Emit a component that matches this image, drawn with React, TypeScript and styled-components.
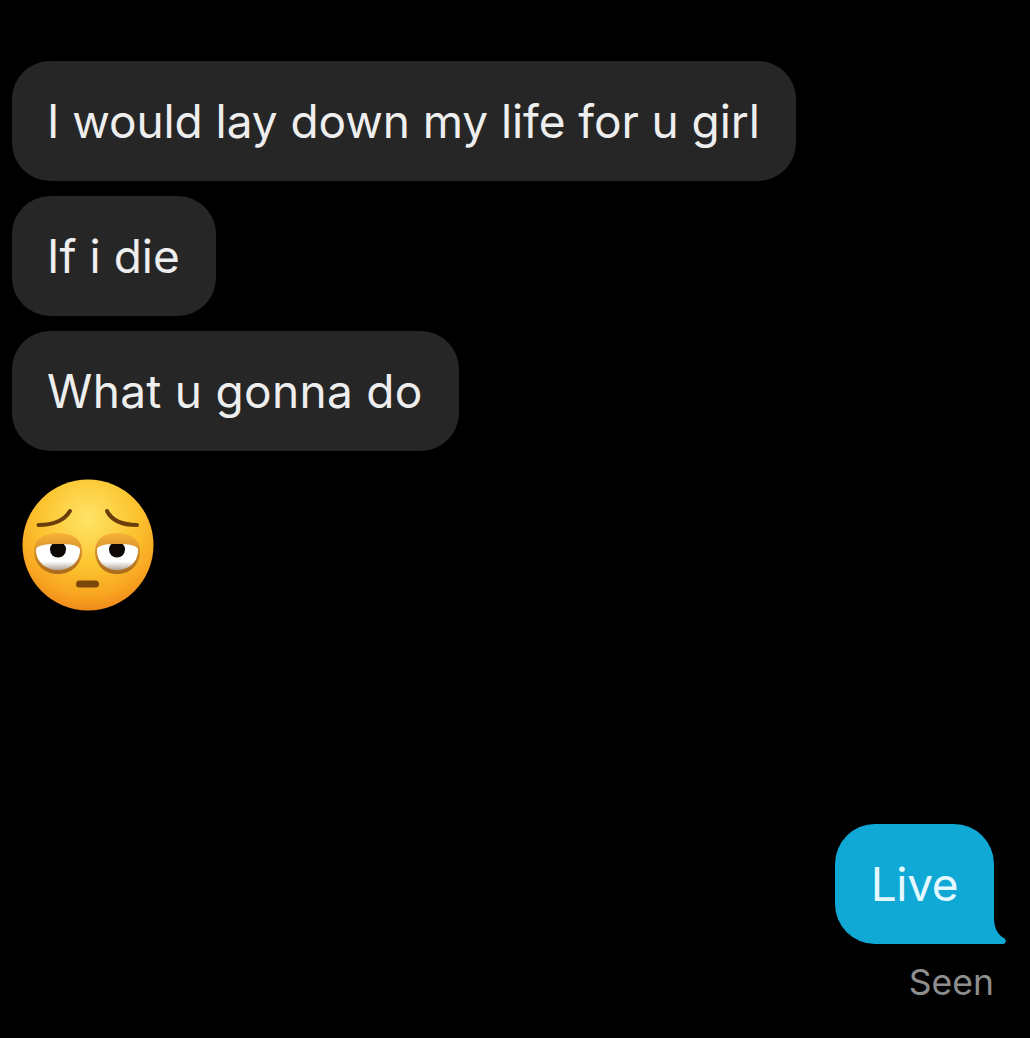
import styled, { createGlobalStyle } from "styled-components";

const GlobalStyle = createGlobalStyle`
  html, body {
    margin: 0;
    background: #000;
  }
`;

const Thread = styled.main`
  display: flex;
  flex-direction: column;
  box-sizing: border-box;
  width: 1030px;
  height: 1038px;
  overflow: hidden;
  padding: 61px 36px 0 12px;
  background: #000;
  font-family: Inter, "Liberation Sans", sans-serif;
`;

const Incoming = styled.div<{ $tracking?: number }>`
  align-self: flex-start;
  box-sizing: border-box;
  height: 120px;
  margin-bottom: 15px;
  padding: 0 36px 0 35px;
  border-radius: 38px;
  background: #262626;
  color: #eeeeee;
  font-size: 46px;
  letter-spacing: ${(props) => props.$tracking ?? -0.1}px;
  line-height: 120px;
  white-space: nowrap;
`;

const EmojiIcon = styled.svg`
  display: block;
  width: 132px;
  height: 132px;
  margin: 13px 0 0 10px;
`;

const Outgoing = styled.div`
  position: relative;
  align-self: flex-end;
  box-sizing: border-box;
  width: 159px;
  height: 120px;
  margin-top: 213px;
  border-radius: 40px 40px 0 40px;
  background: #10a8d5;
  color: #e4f8ff;
  font-size: 46px;
  letter-spacing: -0.3px;
  line-height: 120px;
  text-align: center;
`;

const Tail = styled.svg`
  position: absolute;
  right: -12px;
  bottom: 0;
  width: 24px;
  height: 38px;
`;

const Status = styled.div`
  align-self: flex-end;
  margin-top: 17px;
  color: #8e8e8e;
  font-size: 35.5px;
  line-height: 44px;
`;

function Emoji() {
  return (
    <EmojiIcon viewBox="0 0 132 132" role="img" aria-label="pleading face">
      <defs>
        <radialGradient id="face" cx="50%" cy="30%" r="72%">
          <stop offset="0%" stopColor="#ffe468" />
          <stop offset="50%" stopColor="#fcc530" />
          <stop offset="82%" stopColor="#f8a420" />
          <stop offset="100%" stopColor="#ee861a" />
        </radialGradient>
        <linearGradient id="lid" x1="0" y1="0" x2="0" y2="1">
          <stop offset="0%" stopColor="#f8b238" />
          <stop offset="100%" stopColor="#a9691c" />
        </linearGradient>
        <linearGradient id="sclera" x1="0" y1="0" x2="0" y2="1">
          <stop offset="68%" stopColor="#ffffff" />
          <stop offset="100%" stopColor="#a8998b" />
        </linearGradient>
        <clipPath id="eyeLeft">
          <path d="M14 71C14 66 24 65 36 65S58 66 58 71C58 83 48 91 36 91S14 83 14 71Z" />
        </clipPath>
        <clipPath id="eyeRight">
          <path d="M75 71C75 66 84 65 95 65S116 66 116 71C116 83 107 91 95 91S75 83 75 71Z" />
        </clipPath>
      </defs>
      <circle cx="66" cy="66" r="65.5" fill="url(#face)" />
      <path d="M16.5 46C30 46 42 42 48 32" fill="none" stroke="#6b3d0a" strokeWidth="4" strokeLinecap="round" />
      <path d="M115 46C101 46 90 42 85 32" fill="none" stroke="#6b3d0a" strokeWidth="4" strokeLinecap="round" />
      <path d="M12 72C12 60 22 54 36 54S60 60 60 72C60 85 50 95 36 95S12 85 12 72Z" fill="url(#lid)" />
      <path d="M73 72C73 60 82 54 95 54S118 60 118 72C118 85 109 95 95 95S73 85 73 72Z" fill="url(#lid)" />
      <g clipPath="url(#eyeLeft)">
        <rect x="12" y="62" width="48" height="30" fill="url(#sclera)" />
        <circle cx="36" cy="70.5" r="8" fill="#0d0805" />
      </g>
      <g clipPath="url(#eyeRight)">
        <rect x="72" y="62" width="46" height="30" fill="url(#sclera)" />
        <circle cx="95" cy="70.5" r="8" fill="#0d0805" />
      </g>
      <rect x="54" y="101.5" width="23" height="7" rx="3.5" fill="#7a4609" />
    </EmojiIcon>
  );
}

export default function App() {
  return (
    <>
      <GlobalStyle />
      <Thread>
        <Incoming $tracking={-0.07}>I would lay down my life for u girl</Incoming>
        <Incoming $tracking={0.05}>If i die</Incoming>
        <Incoming $tracking={0.3}>What u gonna do</Incoming>
        <Emoji />
        <Outgoing>
          Live
          <Tail viewBox="0 0 24 38" aria-hidden="true">
            <path d="M0 0H12V12C12 22 16 29 22 32C25 34 24 38 21 38H0Z" fill="#10a8d5" />
          </Tail>
        </Outgoing>
        <Status>Seen</Status>
      </Thread>
    </>
  );
}
